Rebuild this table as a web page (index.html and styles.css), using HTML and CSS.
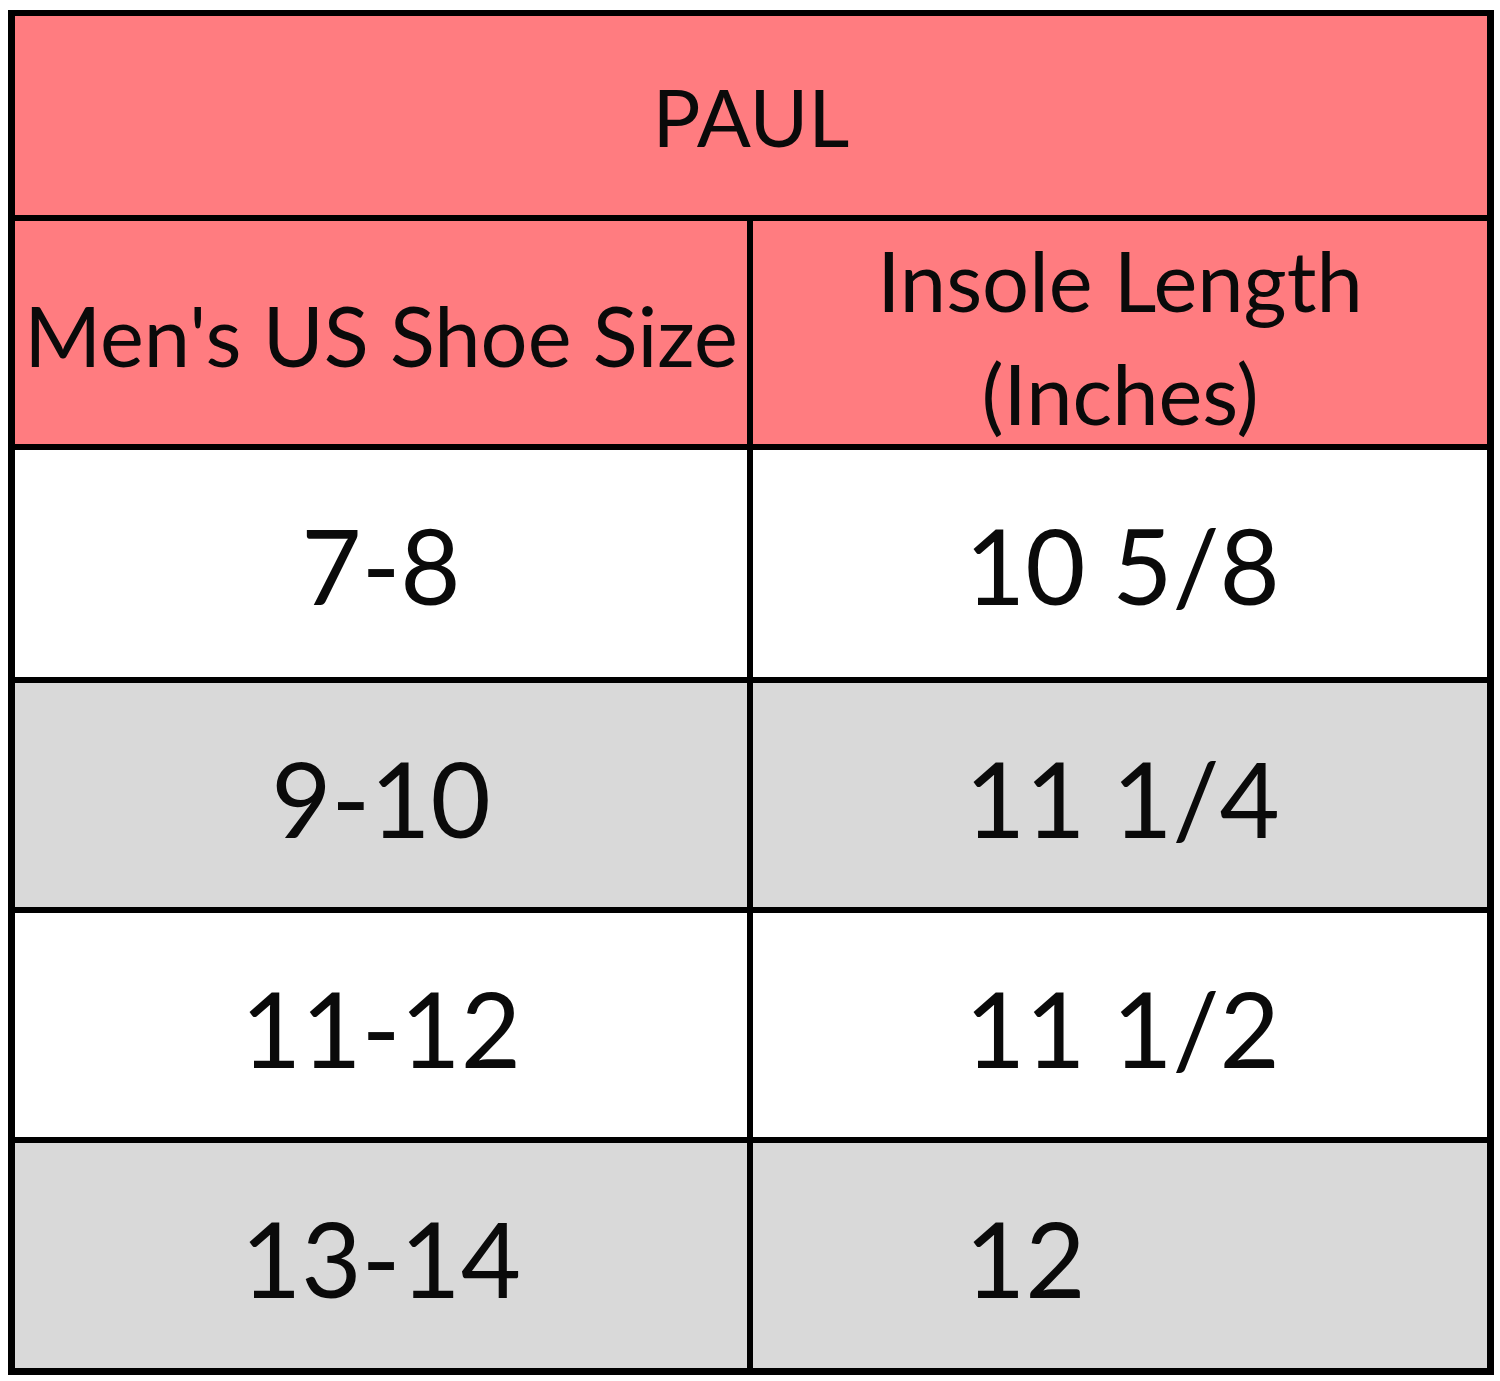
FILE: index.html
```html
<!DOCTYPE html>
<html>
<head>
<meta charset="utf-8">
<link rel="stylesheet" href="styles.css">
</head>
<body>
<div class="chart">
  <div class="cell title">PAUL</div>
  <div class="cell head head-left">Men's US Shoe Size</div>
  <div class="cell head head-right">Insole Length<br>(Inches)</div>
  <div class="cell data size">7-8</div>
  <div class="cell data len">10 5/8</div>
  <div class="cell data size alt">9-10</div>
  <div class="cell data len alt">11 1/4</div>
  <div class="cell data size">11-12</div>
  <div class="cell data len">11 1/2</div>
  <div class="cell data size alt">13-14</div>
  <div class="cell data len alt">12</div>
</div>
</body>
</html>
```
FILE: styles.css
```css
html, body {
  background: #ffffff;
}
body {
  margin: 10px 0 0 8px;
  font-family: Lato, "Liberation Sans", sans-serif;
  color: #0a0a0a;
}
.chart {
  display: grid;
  width: 1486px;
  box-sizing: border-box;
  grid-template-columns: 732px 734px;
  grid-template-rows: 199px 223px 227px 224px 224px 225px;
  gap: 6px;
  padding: 6px 7px 7px 7px;
  background: #000000;
}
.cell {
  box-sizing: border-box;
  background: #ffffff;
  white-space: nowrap;
  line-height: 1;
}
.title {
  grid-column: 1 / span 2;
  background: #ff7c80;
  text-align: center;
  font-size: 80px;
  padding-top: 60px;
}
.head {
  background: #ff7c80;
  font-size: 83px;
  text-align: center;
}
.head-left {
  padding-top: 73px;
}
.head-right {
  line-height: 113px;
  padding-top: 3px;
}
.data {
  font-size: 104px;
  padding-top: 63px;
}
.size {
  text-align: center;
}
.len {
  text-align: left;
  padding-left: 212px;
}
.alt {
  background: #d9d9d9;
}
```
